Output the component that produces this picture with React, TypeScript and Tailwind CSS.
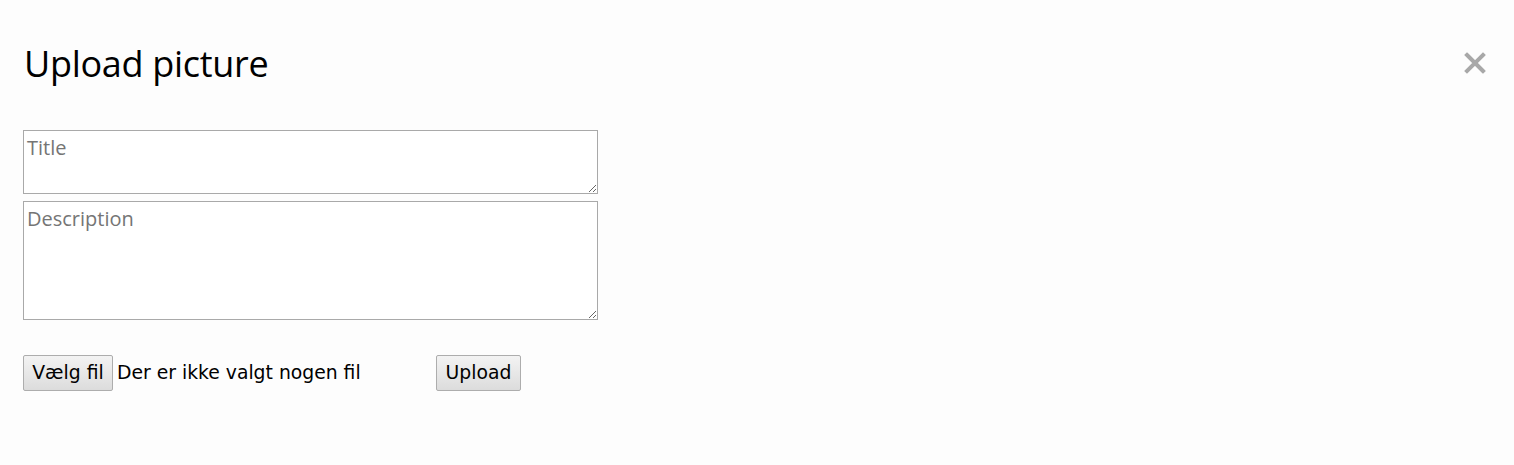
export default function App() {
  return (
    <div className="min-h-screen w-full bg-[#fdfdfd] px-6 pt-[38px] font-['DejaVu_Sans',sans-serif] text-black">
      <div className="flex items-start justify-between">
        <h1 className="font-['Open_Sans',sans-serif] text-[36px] leading-[52px] font-normal tracking-[-0.3px]">
          Upload picture
        </h1>
        <button
          type="button"
          aria-label="Close"
          className="mr-[4px] mt-[14px] text-[#a8a8a8]"
        >
          <svg width="22" height="22" viewBox="0 0 22 22">
            <path
              d="M3 3 L19 19 M19 3 L3 19"
              stroke="currentColor"
              strokeWidth="4"
              strokeLinecap="square"
            />
          </svg>
        </button>
      </div>

      <form className="mt-[40px] -ml-px flex w-[575px] flex-col gap-[7px]">
        <textarea
          placeholder="Title"
          className="h-[64px] w-full resize-y border border-[#a9a9a9] bg-white px-[3px] py-[4px] font-['Open_Sans',sans-serif] text-[20px] leading-[26px] placeholder:text-[#757575] focus:outline-none"
        />
        <textarea
          placeholder="Description"
          className="h-[119px] w-full resize-y border border-[#a9a9a9] bg-white px-[3px] py-[4px] font-['Open_Sans',sans-serif] text-[20px] leading-[26px] placeholder:text-[#757575] focus:outline-none"
        />

        <div className="mt-[28px] flex items-center text-[18.8px]">
          <button
            type="button"
            className="h-[36px] w-[90px] rounded-[2px] border border-[#adadad] bg-gradient-to-b from-[#f3f3f3] to-[#dcdcdc] pt-px"
          >
            Vælg fil
          </button>
          <span className="ml-[4px] w-[319px] pt-px">Der er ikke valgt nogen fil</span>
          <button
            type="button"
            className="h-[36px] w-[85px] rounded-[2px] border border-[#adadad] bg-gradient-to-b from-[#f3f3f3] to-[#dcdcdc] pt-px"
          >
            Upload
          </button>
        </div>
      </form>
    </div>
  );
}
